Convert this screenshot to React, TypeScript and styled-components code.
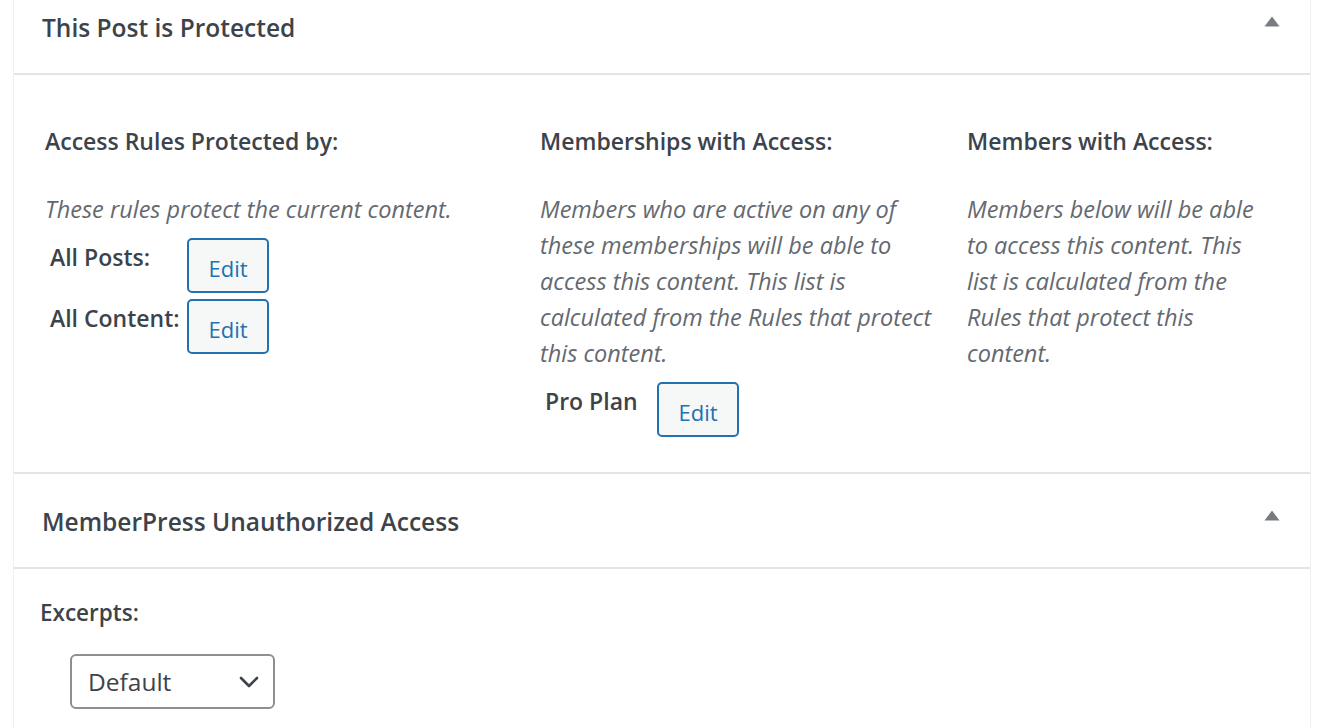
import styled, { createGlobalStyle } from "styled-components";

const colors = {
  text: "#3c434a",
  muted: "#646970",
  divider: "#e2e4e7",
  frame: "#f0f0f1",
  primary: "#2271b1",
  buttonBg: "#f6f7f7",
  inputBorder: "#8c8f94",
  toggle: "#787c82",
};

const GlobalStyle = createGlobalStyle`
  html, body {
    margin: 0;
    padding: 0;
    background: #ffffff;
  }
  body {
    font-family: "Open Sans", "Noto Sans", "DejaVu Sans", sans-serif;
    color: ${colors.text};
  }
`;

const Page = styled.div`
  width: 1331px;
  height: 728px;
  overflow: hidden;
  padding: 0 20px 0 13px;
  box-sizing: border-box;
`;

const Stack = styled.div`
  margin-top: -20px;
  border-left: 1px solid ${colors.frame};
  border-right: 1px solid ${colors.frame};
`;

const Postbox = styled.section`
  border-bottom: 2px solid ${colors.divider};
`;

const PostboxHeader = styled.div`
  height: 93px;
  display: flex;
  align-items: center;
  justify-content: space-between;
  padding: 0 30px 0 28px;
  border-bottom: 2px solid ${colors.divider};
`;

const Title = styled.h2`
  margin: 0;
  padding-top: 2px;
  font-size: 24.5px;
  font-weight: 600;
  line-height: 30px;
  color: ${colors.text};
`;

const ToggleButton = styled.span`
  display: flex;
  margin-top: -11px;
`;

const Inside = styled.div<{ $pad: string }>`
  padding: ${(p) => p.$pad};
`;

const Columns = styled.div`
  display: flex;
`;

const Column = styled.div<{ $width: string; $gutter: number }>`
  width: ${(p) => p.$width};
  padding-right: ${(p) => p.$gutter}px;
  flex: none;
  display: flex;
  flex-direction: column;
`;

const ColumnHeading = styled.h3`
  margin: 0 0 35px;
  font-size: 23px;
  font-weight: 600;
  line-height: 30px;
  color: ${colors.text};
`;

const Description = styled.p`
  margin: 0 0 11px;
  font-size: 23.5px;
  font-style: italic;
  line-height: 36px;
  color: ${colors.muted};
`;

const RuleList = styled.div`
  display: flex;
  flex-direction: column;
  gap: 6px;
`;

const RuleRow = styled.div<{ $indent: number }>`
  display: flex;
  align-items: flex-start;
  padding-left: ${(p) => p.$indent}px;
`;

const RuleLabel = styled.span<{ $width: number }>`
  width: ${(p) => p.$width}px;
  flex: none;
  padding-top: 4px;
  font-size: 23px;
  font-weight: 600;
  line-height: 30px;
  color: ${colors.text};
  white-space: nowrap;
`;

const EditButton = styled.button`
  width: 82px;
  height: 55px;
  box-sizing: border-box;
  padding: 5px 0 0;
  border: 2px solid ${colors.primary};
  border-radius: 5px;
  background: ${colors.buttonBg};
  color: ${colors.primary};
  font-family: inherit;
  font-size: 22px;
  line-height: 30px;
  cursor: pointer;
`;

const FieldLabel = styled.label`
  display: block;
  font-size: 22.5px;
  font-weight: 600;
  line-height: 30px;
  color: ${colors.text};
  margin-bottom: 26px;
`;

const SelectBox = styled.div`
  margin-left: 30px;
  width: 205px;
  height: 55px;
  box-sizing: border-box;
  border: 2px solid ${colors.inputBorder};
  border-radius: 6px;
  display: flex;
  align-items: center;
  justify-content: space-between;
  padding: 0 14px 0 16px;
  font-size: 24.5px;
  color: ${colors.text};
  background: #fff;
`;

const Triangle = () => (
  <svg width="16" height="11" viewBox="0 0 16 11" aria-hidden="true">
    <path d="M8 0.5 L15.5 10.5 H0.5 Z" fill={colors.toggle} />
  </svg>
);

const Chevron = () => (
  <svg width="20" height="12" viewBox="0 0 20 12" aria-hidden="true">
    <path
      d="M2 2 L10 10 L18 2"
      fill="none"
      stroke={colors.text}
      strokeWidth="2.6"
      strokeLinecap="round"
      strokeLinejoin="round"
    />
  </svg>
);

const App = () => {
  return (
    <Page>
      <GlobalStyle />
      <Stack>
        <Postbox>
          <PostboxHeader>
            <Title>This Post is Protected</Title>
            <ToggleButton>
              <Triangle />
            </ToggleButton>
          </PostboxHeader>
          <Inside $pad="51px 30px 35px 31px">
            <Columns>
              <Column $width="475px" $gutter={20}>
                <ColumnHeading>Access Rules Protected by:</ColumnHeading>
                <Description>These rules protect the current content.</Description>
                <RuleList>
                  <RuleRow $indent={5}>
                    <RuleLabel $width={137}>All Posts:</RuleLabel>
                    <EditButton>Edit</EditButton>
                  </RuleRow>
                  <RuleRow $indent={5}>
                    <RuleLabel $width={137}>All Content:</RuleLabel>
                    <EditButton>Edit</EditButton>
                  </RuleRow>
                </RuleList>
              </Column>
              <Column $width="407px" $gutter={20}>
                <ColumnHeading>Memberships with Access:</ColumnHeading>
                <Description>
                  Members who are active on any of these memberships will be
                  able to access this content. This list is calculated from the
                  Rules that protect this content.
                </Description>
                <RuleList>
                  <RuleRow $indent={5}>
                    <RuleLabel $width={112}>Pro Plan</RuleLabel>
                    <EditButton>Edit</EditButton>
                  </RuleRow>
                </RuleList>
              </Column>
              <Column $width="305px" $gutter={0}>
                <ColumnHeading>Members with Access:</ColumnHeading>
                <Description>
                  Members below will be able to access this content. This list
                  is calculated from the Rules that protect this content.
                </Description>
              </Column>
            </Columns>
          </Inside>
        </Postbox>
        <Postbox>
          <PostboxHeader>
            <Title>MemberPress Unauthorized Access</Title>
            <ToggleButton>
              <Triangle />
            </ToggleButton>
          </PostboxHeader>
          <Inside $pad="29px 30px 40px 26px">
            <FieldLabel>Excerpts:</FieldLabel>
            <SelectBox>
              <span>Default</span>
              <Chevron />
            </SelectBox>
          </Inside>
        </Postbox>
      </Stack>
    </Page>
  );
};

export default App;
